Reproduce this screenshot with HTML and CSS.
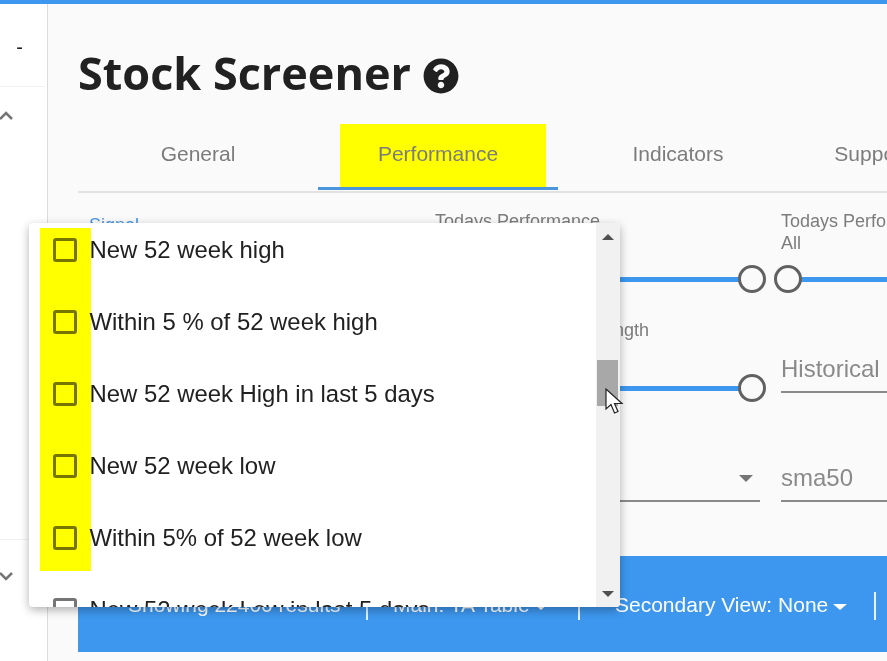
FILE: index.html
```html
<!DOCTYPE html>
<html lang="en">
  <head>
    <meta charset="UTF-8" />
    <meta name="viewport" content="width=device-width, initial-scale=1.0" />
    <title>Stock Screener</title>
    <link rel="stylesheet" href="styles.css">
  </head>
  <body>
    <div class="top-bar"></div>
    <div class="page">
      <aside class="sidebar">
        <div class="side-top"><span class="side-dash">-</span></div>
        <div class="side-list">
          <svg class="chev" width="18" height="12" viewBox="0 0 18 12"><path d="M1 10 L7 4 L13 10" /></svg>
        </div>
        <div class="side-bottom">
          <svg class="chev" width="18" height="12" viewBox="0 0 18 12"><path d="M1 3 L7 9 L13 3" /></svg>
        </div>
      </aside>

      <main class="content">
        <h1 class="title">
          Stock Screener
          <svg class="help" width="36" height="36" viewBox="0 0 512 512"><path d="M504 256c0 136.997-111.043 248-248 248S8 392.997 8 256C8 119.083 119.043 8 256 8s248 111.083 248 248zM262.655 90c-54.497 0-89.255 22.957-116.549 63.758-3.536 5.286-2.353 12.415 2.715 16.258l34.699 26.31c5.205 3.947 12.621 3.008 16.665-2.122 17.864-22.658 30.113-35.797 57.303-35.797 20.429 0 45.698 13.148 45.698 32.958 0 14.976-12.363 22.667-32.534 33.976C247.128 238.528 216 254.941 216 296v4c0 6.627 5.373 12 12 12h56c6.627 0 12-5.373 12-12v-1.333c0-28.462 83.186-29.647 83.186-106.667 0-58.002-60.165-102-116.531-102zM256 338c-25.365 0-46 20.635-46 46 0 25.364 20.635 46 46 46s46-20.636 46-46c0-25.365-20.635-46-46-46z" /></svg>
        </h1>

        <nav class="tabs">
          <div class="tab">General</div>
          <div class="tab active"><span class="tab-mark"></span><span class="tab-label">Performance</span></div>
          <div class="tab">Indicators</div>
          <div class="tab tab-last">Support/Resistance</div>
        </nav>

        <div class="filters">
          <div class="filter">
            <label class="signal-label">Signal</label>
          </div>
          <div class="filter">
            <label>Todays Performance<br>All</label>
            <div class="slider slider-right"><span class="knob"></span></div>
          </div>
          <div class="filter">
            <label>Todays Performance<br>All</label>
            <div class="slider slider-left"><span class="knob"></span></div>
          </div>

          <div class="filter"></div>
          <div class="filter">
            <label class="length-label">Length</label>
            <div class="slider slider-right slider-low"><span class="knob"></span></div>
          </div>
          <div class="filter">
            <div class="field field-low">Historical</div>
          </div>

          <div class="filter"></div>
          <div class="filter">
            <div class="field select"><svg width="14" height="7" viewBox="0 0 14 7"><path d="M0 0h14L7 7z" /></svg></div>
          </div>
          <div class="filter">
            <div class="field">sma50</div>
          </div>
        </div>

        <div class="results-bar">
          <span class="bar-item bar-results">Showing 22400 results</span>
          <span class="bar-sep"></span>
          <span class="bar-item bar-main">Main: TA Table <i class="caret"></i></span>
          <span class="bar-sep"></span>
          <span class="bar-item bar-second">Secondary View: None <i class="caret"></i></span>
          <span class="bar-sep"></span>
        </div>
      </main>
    </div>

    <div class="menu">
      <ul class="menu-list">
        <li class="menu-item"><span class="check"></span>New 52 week high</li>
        <li class="menu-item"><span class="check"></span>Within 5 % of 52 week high</li>
        <li class="menu-item"><span class="check"></span>New 52 week High in last 5 days</li>
        <li class="menu-item"><span class="check"></span>New 52 week low</li>
        <li class="menu-item"><span class="check"></span>Within 5% of 52 week low</li>
        <li class="menu-item"><span class="check"></span>New 52 week Low in last 5 days</li>
      </ul>
      <div class="menu-mark"></div>
      <div class="scrollbar">
        <svg class="arrow" width="12" height="6" viewBox="0 0 12 6"><path d="M0 6h12L6 0z" /></svg>
        <div class="scroll-track"><div class="scroll-thumb"></div></div>
        <svg class="arrow" width="12" height="6" viewBox="0 0 12 6"><path d="M0 0h12L6 6z" /></svg>
      </div>
    </div>

    <svg class="cursor" width="20" height="28" viewBox="0 0 20 28"><path d="M1 1 L1 21 L6 16.500 L9.500 25 L13 23.500 L9.500 15.500 L17 15.500 Z" /></svg>
  </body>
</html>
```

FILE: styles.css
```css
html,
body {
  height: 100%;
}

body {
  margin: 0;
  overflow: hidden;
  font-family: "Liberation Sans", Arial, sans-serif;
  background: #fafafa;
  color: #212121;
}

.top-bar {
  height: 4px;
  background: #3d97ee;
}

.page {
  display: flex;
  height: 657px;
}

.sidebar {
  flex: 0 0 47px;
  background: #fff;
  border-right: 1px solid #dcdcdc;
}

.side-top {
  height: 83px;
  border-bottom: 1px solid #f2f2f2;
  margin-right: 2px;
  padding-top: 31px;
  box-sizing: border-box;
  text-align: right;
  font-size: 20px;
  line-height: 24px;
}

.side-dash {
  margin-right: 22px;
}

.side-list {
  height: 453px;
  padding-top: 22px;
  box-sizing: border-box;
  border-bottom: 1px solid #f2f2f2;
  margin-right: 2px;
}

.side-bottom {
  padding-top: 30px;
}

.chev {
  display: block;
  margin-left: -1px;
}

.chev path {
  fill: none;
  stroke: #757575;
  stroke-width: 2.500;
}

.content {
  flex: 0 0 809px;
  width: 809px;
  margin-left: 30px;
  overflow: hidden;
}

.title {
  margin: 38px 0 0;
  height: 62px;
  display: flex;
  align-items: center;
  gap: 12px;
  font-family: "Open Sans", sans-serif;
  font-size: 45px;
  font-weight: 700;
  line-height: 62px;
  white-space: nowrap;
}

.help {
  margin-top: 5px;
}

.help path {
  fill: #212121;
}

.tabs {
  display: flex;
  margin-top: 20px;
  height: 67px;
  border-bottom: 2px solid #e2e2e2;
}

.tab {
  position: relative;
  flex: 0 0 240px;
  box-sizing: border-box;
  height: 66px;
  padding-top: 18px;
  text-align: center;
  font-size: 21px;
  line-height: 24px;
  color: #7c7c7c;
  white-space: nowrap;
}

.tab.active {
  border-bottom: 3px solid #4a95dc;
}

.tab-last {
  padding-left: 16px;
}

.tab-mark {
  position: absolute;
  left: 22px;
  top: 0;
  width: 206px;
  height: 63px;
  background: #ffff00;
}

.tab-label {
  position: relative;
}

.filters {
  display: grid;
  grid-template-columns: 346px 346px 346px;
  grid-template-rows: 109px 146px 91px;
  margin-left: 11px;
  margin-top: 17px;
}

.filter label {
  display: block;
  font-size: 18px;
  line-height: 22px;
  color: #7c7c7c;
  white-space: nowrap;
}

.filter .signal-label {
  margin-top: 4px;
  color: #4a95dc;
}

.filter .length-label {
  width: 214px;
  text-align: right;
}

.slider {
  position: relative;
  height: 5px;
  margin-top: 23px;
  background: #3d97ee;
  width: 325px;
}

.slider-low {
  margin-top: 45px;
}

.knob {
  position: absolute;
  top: -12px;
  width: 22px;
  height: 22px;
  border: 3px solid #616161;
  border-radius: 50%;
  background: #fafafa;
}

.slider-right .knob {
  right: -6px;
}

.slider-left .knob {
  left: -7px;
}

.field {
  position: relative;
  width: 325px;
  height: 37px;
  box-sizing: border-box;
  border-bottom: 2px solid #8a8a8a;
  font-size: 24px;
  line-height: 26px;
  color: #8a8a8a;
}

.field-low {
  margin-top: 37px;
}

.select svg {
  position: absolute;
  right: 7px;
  top: 10px;
}

.select path {
  fill: #757575;
}

.results-bar {
  display: flex;
  align-items: center;
  height: 96px;
  padding-top: 1px;
  box-sizing: border-box;
  background: #3d97ee;
  color: #fff;
  font-size: 21px;
  white-space: nowrap;
}

.bar-results {
  width: 288px;
  padding-left: 50px;
  box-sizing: border-box;
}

.bar-main {
  width: 210px;
  padding-left: 25px;
  box-sizing: border-box;
}

.bar-second {
  width: 294px;
  padding-left: 35px;
  box-sizing: border-box;
}

.bar-sep {
  flex: 0 0 2px;
  height: 28px;
  margin-top: 2px;
  background: #e8f2fc;
}

.caret {
  display: inline-block;
  width: 0;
  height: 0;
  margin-left: -1px;
  vertical-align: 2px;
  border-left: 7px solid transparent;
  border-right: 7px solid transparent;
  border-top: 6px solid #fff;
}

/* dropdown over the form */
.menu {
  position: absolute;
  left: 29px;
  top: 223px;
  width: 591px;
  height: 384px;
  overflow: hidden;
  background: #fff;
  border-radius: 4px;
  box-shadow: 0 3px 10px rgba(0, 0, 0, 0.3);
}

.menu-list {
  list-style: none;
  margin: 0;
  padding: 0;
}

.menu-item {
  display: flex;
  align-items: center;
  gap: 12.500px;
  height: 72px;
  margin-top: -9px;
  margin-bottom: 9px;
  padding-left: 24px;
  font-size: 23.900px;
  color: #212121;
  position: relative;
  z-index: 1;
}

.check {
  flex: 0 0 24px;
  width: 24px;
  height: 24px;
  box-sizing: border-box;
  border: 3px solid #757575;
  border-radius: 3px;
}

.menu-mark {
  position: absolute;
  left: 11px;
  top: 5px;
  width: 51px;
  height: 343px;
  background: #ffff00;
  mix-blend-mode: multiply;
  z-index: 2;
}

.scrollbar {
  position: absolute;
  right: 0;
  top: 0;
  bottom: 0;
  width: 24px;
  background: #f1f1f1;
  display: flex;
  flex-direction: column;
  align-items: center;
  justify-content: space-between;
  padding: 11px 0 10px;
  box-sizing: border-box;
}

.arrow path {
  fill: #505050;
}

.scroll-track {
  flex: 1;
  width: 100%;
  padding-top: 120px;
  box-sizing: border-box;
}

.scroll-thumb {
  width: 21px;
  height: 46px;
  margin-left: 1px;
  background: #a8a8a8;
}

.cursor {
  position: absolute;
  left: 605px;
  top: 388px;
}

.cursor path {
  fill: #fff;
  stroke: #222;
  stroke-width: 1.200;
}
```
